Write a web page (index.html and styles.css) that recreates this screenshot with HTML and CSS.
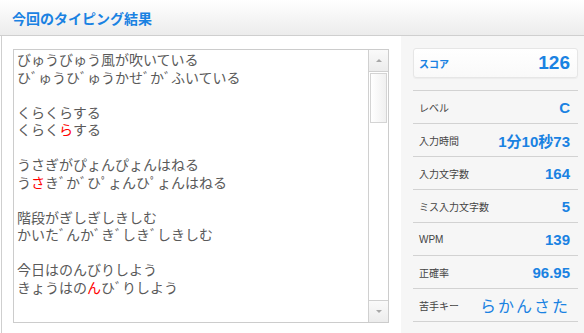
FILE: index.html
```html
<!DOCTYPE html>
<html lang="ja">
<head>
  <meta charset="UTF-8">
  <meta name="viewport" content="width=device-width, initial-scale=1.0">
  <title>今回のタイピング結果</title>
  <link rel="stylesheet" href="styles.css">
</head>
<body>
  <div class="header">
    <h1 class="title">今回のタイピング結果</h1>
  </div>
  <div class="main">
    <div class="left">
      <div class="textbox">
        <div class="text">
          <div class="line">びゅうびゅう風が吹いている</div>
          <div class="line">ひﾞゅうひﾞゅうかせﾞかﾞふいている</div>
          <div class="line blank"></div>
          <div class="line">くらくらする</div>
          <div class="line">くらく<span class="miss">ら</span>する</div>
          <div class="line blank"></div>
          <div class="line">うさぎがぴょんぴょんはねる</div>
          <div class="line">う<span class="miss">さ</span>きﾞかﾞひﾟょんひﾟょんはねる</div>
          <div class="line blank"></div>
          <div class="line">階段がぎしぎしきしむ</div>
          <div class="line">かいたﾞんかﾞきﾞしきﾞしきしむ</div>
          <div class="line blank"></div>
          <div class="line">今日はのんびりしよう</div>
          <div class="line">きょうはの<span class="miss">ん</span>ひﾞりしよう</div>
        </div>
        <div class="scrollbar">
          <div class="sb-button"><span class="arrow-up"></span></div>
          <div class="sb-track"><div class="sb-thumb"></div></div>
          <div class="sb-button down"><span class="arrow-down"></span></div>
        </div>
      </div>
    </div>

    <div class="right">
      <div class="score">
        <span class="score-label">スコア</span>
        <span class="score-value">126</span>
      </div>
      <div class="stats">
        <div class="row"><span class="label">レベル</span><span class="value">C</span></div>
        <div class="row"><span class="label">入力時間</span><span class="value">1分10秒73</span></div>
        <div class="row"><span class="label">入力文字数</span><span class="value">164</span></div>
        <div class="row"><span class="label">ミス入力文字数</span><span class="value">5</span></div>
        <div class="row"><span class="label">WPM</span><span class="value">139</span></div>
        <div class="row"><span class="label">正確率</span><span class="value">96.95</span></div>
        <div class="row"><span class="label">苦手キー</span><span class="value keys">らかんさた</span></div>
      </div>
    </div>
  </div>
</body>
</html>
```

FILE: styles.css
```css
body {
  margin: 0;
  font-family: "Liberation Sans", "Noto Sans CJK JP", sans-serif;
  background: #fff;
  overflow: hidden;
}
.header {
  height: 35px;
  border-bottom: 1px solid #cfcfcf;
  background: linear-gradient(#ffffff, #ececec);
  display: flex;
  align-items: center;
  padding-left: 12px;
}
.title {
  margin: 0;
  font-size: 14px;
  font-weight: bold;
  color: #1a82e2;
  font-family: "Noto Sans CJK JP", sans-serif;
}
.main {
  display: flex;
  height: 297px;
}
.left {
  width: 388px;
  margin-left: 1px;
  border-left: 1px solid #cfcfcf;
  padding: 13px 0 0 11px;
  background: #fff;
}
.textbox {
  display: flex;
  width: 374px;
  height: 272px;
  border: 1px solid #cccccc;
}
.text {
  flex: 1;
  padding: 1px 0 0 3px;
  font-family: "Noto Sans CJK JP", sans-serif;
  font-size: 14px;
  line-height: 17.5px;
  color: #5a5a5a;
  white-space: nowrap;
  overflow: hidden;
}
.line {
  height: 17.5px;
}
.miss {
  display: inline-block;
  color: #f00;
}
.scrollbar {
  width: 19px;
  border-left: 1px solid #d0d0d0;
  display: flex;
  flex-direction: column;
}
.sb-button {
  height: 21px;
  border-bottom: 1px solid #d0d0d0;
  background: linear-gradient(#fafafa, #ececec);
  display: flex;
  align-items: center;
  justify-content: center;
}
.sb-button.down {
  border-bottom: none;
  border-top: 1px solid #d0d0d0;
}
.arrow-up, .arrow-down {
  width: 0;
  height: 0;
  border-left: 3px solid transparent;
  border-right: 3px solid transparent;
}
.arrow-up {
  border-bottom: 3px solid #a8a8a8;
}
.arrow-down {
  border-top: 3px solid #a8a8a8;
}
.sb-track {
  flex: 1;
  padding: 1px;
}
.sb-thumb {
  height: 48px;
  border: 1px solid #d4d4d4;
  background: linear-gradient(to right, #ffffff, #f0f0f0);
}
.right {
  flex: 1;
  background: #f6f6f6;
  padding: 12px 6px 0 12px;
}
.score {
  display: flex;
  align-items: center;
  justify-content: space-between;
  height: 28px;
  padding: 0 7px 0 5px;
  border: 1px solid #e6e6e6;
  border-radius: 3px;
  background: linear-gradient(#ffffff, #f9f9f9);
  box-shadow: 0 1px 1px rgba(0, 0, 0, 0.04);
}
.score-label {
  font-size: 10px;
  font-weight: bold;
  color: #1a82e2;
  font-family: "Noto Sans CJK JP", sans-serif;
}
.score-value {
  font-size: 19px;
  font-weight: bold;
  color: #1a82e2;
}
.stats {
  margin-top: 12px;
  border-top: 1px solid #d2d2d2;
}
.row {
  display: flex;
  align-items: center;
  justify-content: space-between;
  height: 32px;
  padding: 0 8px 0 6px;
  border-bottom: 1px solid #d2d2d2;
}
.label {
  font-size: 10px;
  color: #444;
}
.value {
  font-size: 15px;
  font-weight: bold;
  color: #1a82e2;
}
.keys {
  font-family: "Noto Sans CJK JP", sans-serif;
  font-weight: normal;
  font-size: 16px;
  letter-spacing: 2px;
}
```
